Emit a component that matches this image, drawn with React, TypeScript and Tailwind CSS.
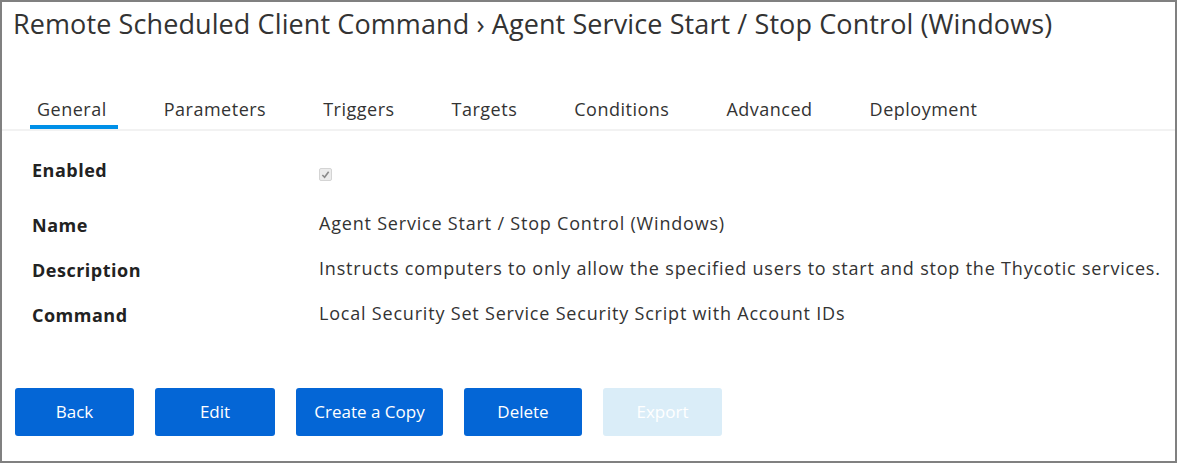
import React from "react";

const tabs = ["General", "Parameters", "Triggers", "Targets", "Conditions", "Advanced", "Deployment"];

const fields = [
  { label: "Name", value: "Agent Service Start / Stop Control (Windows)" },
  { label: "Description", value: "Instructs computers to only allow the specified users to start and stop the Thycotic services." },
  { label: "Command", value: "Local Security Set Service Security Script with Account IDs" },
];

const buttons = [
  { label: "Back", w: "w-[119px]" },
  { label: "Edit", w: "w-[120px]" },
  { label: "Create a Copy", w: "w-[147px]" },
  { label: "Delete", w: "w-[118px]" },
];

export default function App() {
  return (
    <div
      className="w-[1177px] h-[463px] border-2 border-[#808080] bg-white text-[#333] overflow-hidden"
      style={{ fontFamily: '"Open Sans", "Noto Sans", sans-serif' }}
    >
      <h1 className="pl-[11px] pt-[3px] text-[27px] leading-[37px] tracking-[0.1px] font-normal text-[#333]">
        Remote Scheduled Client Command › Agent Service Start / Stop Control (Windows)
      </h1>

      <div className="mt-[55px] flex border-b-2 border-[#f2f2f2] pl-[28px]">
        {tabs.map((t, i) => (
          <div
            key={t}
            className={
              "pl-[7px] pr-[11px] pb-[3px] text-[18px] leading-[25px] tracking-[0.5px] border-b-4 mr-[39px] text-[#333] " +
              (i === 0 ? "border-[#0090e8]" : "border-transparent")
            }
          >
            {t}
          </div>
        ))}
      </div>

      <div className="pl-[30px] pt-[27px]">
        <div className="flex h-[55px]">
          <div className="w-[287px] text-[18px] font-bold leading-[24px] tracking-[0.5px] text-[#222]">Enabled</div>
          <div className="pt-[10px]">
            <div className="w-[13px] h-[13px] rounded-[2px] border border-[#d4d4d4] bg-[#ececec] flex items-center justify-center">
              <svg width="9" height="9" viewBox="0 0 10 10">
                <path d="M1.5 5.5 L4 8 L8.5 2" fill="none" stroke="#8a8a8a" strokeWidth="1.8" />
              </svg>
            </div>
          </div>
        </div>
        {fields.map((f) => (
          <div key={f.label} className="flex h-[45px]">
            <div className="w-[287px] text-[18px] font-bold leading-[24px] tracking-[0.5px] text-[#222]">{f.label}</div>
            <div className="text-[18px] leading-[24px] tracking-[0.8px] text-[#333] -mt-[2px]">{f.value}</div>
          </div>
        ))}
      </div>

      <div className="flex gap-[21px] pl-[13px] mt-[40px]">
        {buttons.map((b) => (
          <button
            key={b.label}
            className={b.w + " h-[48px] rounded-[3px] bg-[#0466d6] text-white text-[17px]"}
          >
            {b.label}
          </button>
        ))}
        <button className="w-[119px] h-[48px] rounded-[3px] bg-[#daedf8] text-white text-[17px]">Export</button>
      </div>
    </div>
  );
}
